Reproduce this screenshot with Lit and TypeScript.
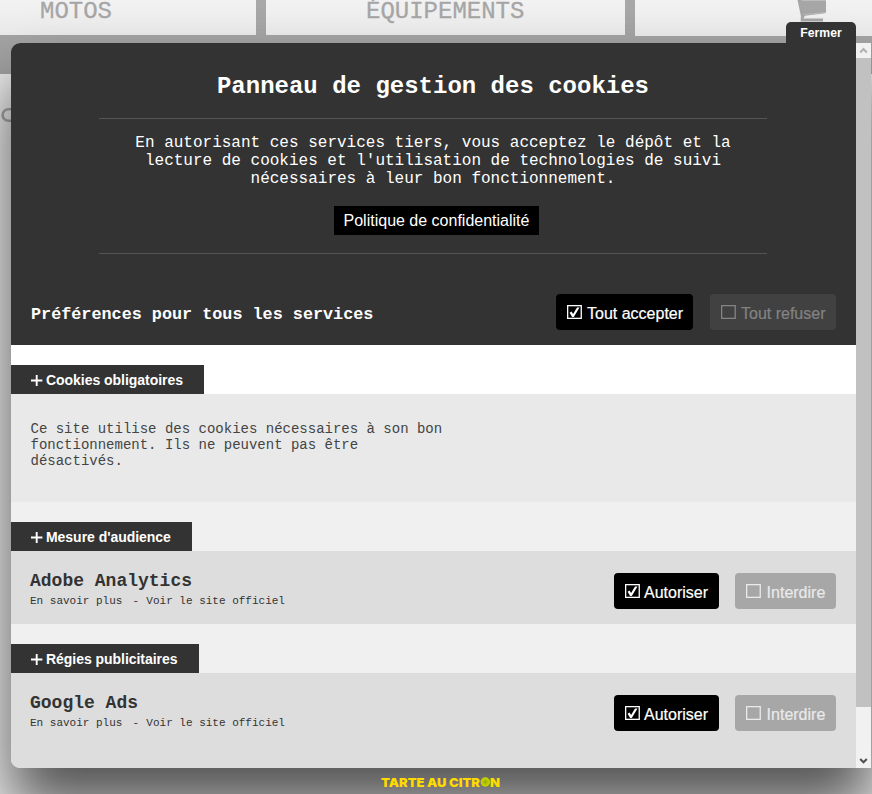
import { LitElement, html, css, svg } from "lit";
import { customElement, property } from "lit/decorators.js";

@customElement("choice-button")
class ChoiceButton extends LitElement {
  @property({ type: String }) label = "";
  @property({ type: Boolean }) checked = false;

  static styles = css`
    :host { display: block; height: 36px; border-radius: 4px; box-sizing: border-box; font: 16px/36px "Liberation Sans", Arial, sans-serif; }
    .inner { display: flex; padding-left: 11px; height: 36px; white-space: nowrap; }
    .box { width: 15px; height: 15px; margin: 11px 5px 0 0; flex: none; }
    .label { padding-top: 1.5px; margin-left: var(--label-shift, 0px); -webkit-text-stroke: 0.2px currentColor; }
  `;

  render() {
    return html`<div class="inner">
      <svg class="box" viewBox="0 0 15 15" fill="none" stroke="currentColor">
        <rect x="0.65" y="0.65" width="13.6" height="12.7" stroke-width="1.3" />
        ${this.checked ? svg`<path d="M2.6 7.8 L4.5 6.5 L6.1 8.9 L10 2.6 L12.5 2.6 L6.8 12 L5.1 12 Z" fill="currentColor" stroke="none" />` : null}
      </svg>
      <span class="label">${this.label}</span>
    </div>`;
  }
}

@customElement("app-root")
class AppRoot extends LitElement {
  static styles = css`
    :host { display: block; position: relative; width: 872px; height: 794px; overflow: hidden; background: #ececec; font-family: "Courier New", "Liberation Mono", monospace; color: #333; }
    .page { height: 794px; }
    .nav { display: flex; gap: 10px; height: 74px; background: linear-gradient(#a8a8a8, #9e9e9e); align-items: flex-start; }
    .tile { height: 35px; background: linear-gradient(#f2f2f2, #ebebeb); color: #a6a6a6; font-size: 24px; line-height: 24px; box-sizing: border-box; white-space: nowrap; -webkit-text-stroke: 0.3px #a6a6a6; }
    .t1 { width: 256px; padding-left: 40px; }
    .t2 { width: 359px; padding-left: 100px; }
    .t3 { width: 237px; height: 36px; padding-left: 161px; }
    .cart { display: block; }
    .search { display: block; margin: 33px 0 0 1px; }
    .dialog { position: absolute; left: 11px; top: 43px; width: 860px; height: 725px; border-radius: 9px 0 0 9px; box-shadow: 0 40px 60px #545454; display: flex; }
    .close { position: absolute; left: 786px; top: 22px; width: 70px; height: 22px; border-radius: 5px 5px 0 0; background: #333; color: #fff; font: bold 12.2px/22px "Liberation Sans", Arial, sans-serif; text-align: center; }
    .panel { width: 845px; height: 725px; border-radius: 9px 0 0 9px; overflow: hidden; background: #ddd; }
    .head { height: 302px; background: #333; color: #fff; display: flex; flex-direction: column; }
    .title { height: 75px; margin: 0 89px 0 88px; border-bottom: 1px solid #555; font-size: 24px; font-weight: bold; line-height: 87px; text-align: center; white-space: nowrap; }
    .intro { margin: 0 89px 0 88px; height: 134px; border-bottom: 1px solid #555; display: flex; flex-direction: column; align-items: center; font-size: 16px; line-height: 18px; text-align: center; white-space: nowrap; }
    .intro p { margin: 15px 0 18px; }
    .policy { box-sizing: border-box; width: 205px; height: 29px; margin-left: 7px; background: #000; font: 16px/29px "Liberation Sans", Arial, sans-serif; text-align: center; }
    .all { display: flex; margin-top: 40px; padding: 0 20px; }
    .all h2 { flex: 1; margin: 0; font-size: 16.8px; line-height: 41px; white-space: nowrap; }
    .all .yes { width: 137px; margin-right: 17px; }
    .all .no { width: 126px; }
    .yes { background: #000; color: #fff; }
    .all .no { background: #414141; color: #838383; }
    .strip { height: 49px; box-sizing: border-box; padding-top: 20px; background: #f0f0f0; }
    .strip.white { background: #fff; }
    .tab { display: flex; align-items: center; height: 29px; box-sizing: border-box; padding: 0 0 0 20px; gap: 4px; background: #333; color: #fff; font: bold 14px/30px "Liberation Sans", Arial, sans-serif; white-space: nowrap; }
    .tab svg { flex: none; }
    .tab.a { width: 193px; } .tab.b { width: 181px; } .tab.c { width: 188px; }
    .note { height: 108px; box-sizing: border-box; padding: 27px 0 0 19.5px; background: #e9e9e9; color: #444; font-size: 14px; line-height: 16px; white-space: nowrap; }
    .service { display: flex; height: 73px; box-sizing: border-box; padding: 21px 20px 0 19px; background: #ddd; }
    .service choice-button { margin-top: 1px; }
    .info { flex: 1; }
    .name { font-size: 18px; font-weight: bold; line-height: 18px; }
    .links { display: flex; font-size: 11px; line-height: 12px; margin-top: 5px; white-space: nowrap; }
    .dash { margin: 0 7.3px 0 10px; }
    .service .yes { width: 105px; margin-right: 16px; --label-shift: -1px; }
    .service .no { width: 101px; background: #a7a7a7; color: #eaeaea; --label-shift: 0.6px; }
    .scroll { width: 15px; height: 725px; background: #f1f1f1; display: flex; flex-direction: column; }
    .arrow { height: 15px; display: block; }
    .thumb { height: 649px; background: #c1c1c1; }
    .gap { flex: 1; }
    .logo { position: absolute; left: 380px; top: 774px; }
    .brand { font: 900 12.4px Inter, sans-serif; fill: #ffda00; }
  `;

  private tab(kind: string, text: string) {
    return html`<div class="tab ${kind}">
      <svg width="12" height="12" viewBox="0 0 12 12" stroke="#fff" stroke-width="1.9"><path d="M0 6.5H11.4M5.7 1V12" /></svg>
      <tab-label .text=${text}></tab-label>
    </div>`;
  }

  private service(name: string) {
    return html`<div class="service">
      <div class="info">
        <div class="name">${name}</div>
        <div class="links"><span>En savoir plus</span><span class="dash">-</span><span>Voir le site officiel</span></div>
      </div>
      <choice-button class="yes" label="Autoriser" checked></choice-button>
      <choice-button class="no" label="Interdire"></choice-button>
    </div>`;
  }

  render() {
    return html`
      <div class="page">
        <div class="nav">
          <div class="tile t1">MOTOS</div>
          <div class="tile t2">ÉQUIPEMENTS</div>
          <div class="tile t3">
            <svg class="cart" width="34" height="26" viewBox="0 0 34 26" fill="#a6a6a6">
              <path d="M1.5 0H30V12L29 13.2L9 15.8L7.2 18.6H27V21.6H4.7L4.9 16Z" />
              <path d="M7.6 14.6L29 12.6" stroke="#c8c8c8" stroke-width="0.6" />
              <path d="M6 0.5H30" stroke="#bdbdbd" />
            </svg>
          </div>
        </div>
        <svg class="search" width="14" height="16" viewBox="0 0 14 16" fill="none" stroke="#999" stroke-width="2.6"><rect x="1.6" y="2.2" width="16" height="11.6" rx="6" /></svg>
      </div>
      <div class="dialog">
        <div class="panel">
          <div class="head">
            <div class="title">Panneau de gestion des cookies</div>
            <div class="intro">
              <p>En autorisant ces services tiers, vous acceptez le dépôt et la<br />lecture de cookies et l'utilisation de technologies de suivi<br />nécessaires à leur bon fonctionnement.</p>
              <div class="policy">Politique de confidentialité</div>
            </div>
            <div class="all">
              <h2>Préférences pour tous les services</h2>
              <choice-button class="yes" label="Tout accepter" checked></choice-button>
              <choice-button class="no" label="Tout refuser"></choice-button>
            </div>
          </div>
          <div class="strip white">${this.tab("a", "Cookies obligatoires")}</div>
          <div class="note">Ce site utilise des cookies nécessaires à son bon<br />fonctionnement. Ils ne peuvent pas être<br />désactivés.</div>
          <div class="strip">${this.tab("b", "Mesure d'audience")}</div>
          ${this.service("Adobe Analytics")}
          <div class="strip">${this.tab("c", "Régies publicitaires")}</div>
          ${this.service("Google Ads")}
        </div>
        <div class="scroll">
          <svg class="arrow" width="15" height="15" fill="none" stroke="#b0b0b0" stroke-width="2"><path d="M4.2 9.5L7.5 6L10.8 9.5" /></svg>
          <div class="thumb"></div>
          <div class="gap"></div>
          <svg class="arrow" width="15" height="15" fill="none" stroke="#505050" stroke-width="2"><path d="M4.2 6L7.5 9.3L10.8 6" /></svg>
        </div>
      </div>
      <div class="close">Fermer</div>
      <svg class="logo" width="124" height="18">
        <text class="brand" x="1" y="12.6" textLength="99" lengthAdjust="spacingAndGlyphs">TARTE AU CITR</text>
        <circle cx="105.3" cy="8" r="4.7" fill="#c9d400" />
        <path d="M102 8H108.6M105.3 4.7V11.3M103 5.7L107.6 10.3M107.6 5.7L103 10.3" stroke="#93a800" stroke-width="0.8" />
        <text class="brand" x="110" y="12.6" textLength="10" lengthAdjust="spacingAndGlyphs">N</text>
      </svg>
    `;
  }
}

@customElement("tab-label")
class TabLabel extends LitElement {
  @property({ attribute: false }) text = "";

  static styles = css`
    :host { display: block; margin-left: -1px; letter-spacing: -0.04px; }
  `;

  render() {
    return html`${this.text}`;
  }
}
